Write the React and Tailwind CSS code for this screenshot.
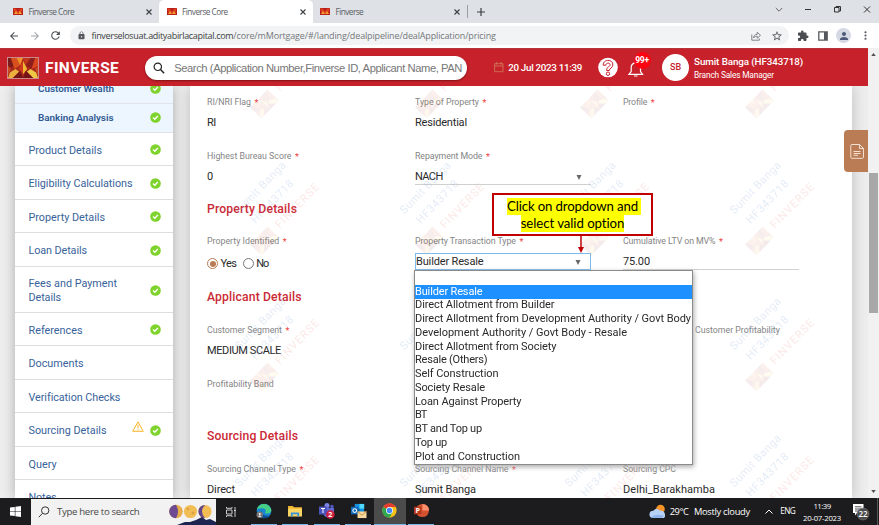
import { useLayoutEffect, useRef } from "react";
import { MdArrowBack, MdArrowForward, MdRefresh, MdLock, MdStarBorder, MdExtension, MdPerson, MdMoreVert } from "react-icons/md";

/* Single-line label whose letter spacing is adjusted to fill a given width. */
function T({ w, className = "", children }) {
  const ref = useRef(null);
  useLayoutEffect(() => {
    const el = ref.current;
    el.style.letterSpacing = "0px";
    const natural = parseFloat(getComputedStyle(el).width);
    const n = el.textContent.length;
    if (w && n > 1) el.style.letterSpacing = (w - natural) / (n - 0.5) + "px";
  }, [w]);
  return <span ref={ref} className={"inline-block w-max shrink-0 whitespace-pre " + className}>{children}</span>;
}

function Logo({ className }) {
  return (
    <svg viewBox="0 0 32 22" className={className} preserveAspectRatio="none">
      <rect width="32" height="22" fill="#a8281c" />
      <path d="M0 0h9l-5 11L0 8z" fill="#7d1a1a" />
      <path d="M3 0l4 12 6-4L9 0z" fill="#d9501f" />
      <path d="M9 0l4 8 3-8z" fill="#f0912c" />
      <path d="M16 0l3 8 5-8z" fill="#c2361c" />
      <path d="M24 0l-5 8 6 4 4-12z" fill="#8e1e1b" />
      <path d="M29 0h3v9l-7 3z" fill="#d9461f" />
      <path d="M16 3l-4.500 9 4.500 6z" fill="#cf3a1e" />
      <path d="M16 3l4.500 9-4.500 6z" fill="#f0b534" />
      <path d="M0 22l2-6 6-4 4 3-6 7z" fill="#ecae3c" />
      <path d="M32 22l-2-6-6-4-4 3 6 7z" fill="#efc646" />
      <path d="M5 22l8-8 3 8zM27 22l-8-8-3 8z" fill="#741416" />
      <path d="M0 9l3 3-3 7zM32 9l-3 3 3 7z" fill="#c94a20" />
    </svg>
  );
}

function MiniLogo() {
  return (
    <svg viewBox="0 0 10 7" className="h-[7px] w-[10px] shrink-0">
      <rect width="10" height="7" fill="#b8201c" />
      <path d="M0 0l3 1 2 3 2-3 3-1-2 5H2z" fill="#e0401f" />
      <path d="M1 6l2-3 2 3 2-3 2 3z" fill="#f4a02c" />
    </svg>
  );
}

function Check() {
  return (
    <svg viewBox="0 0 11 11" className="size-[11px] shrink-0">
      <circle cx="5.5" cy="5.5" r="5.3" fill="#7ed42c" />
      <path d="M3.100 5.600l1.700 1.700 3.100-3.300" fill="none" stroke="#fff" strokeWidth="1.400" />
    </svg>
  );
}

function Cross() {
  return (
    <svg viewBox="0 0 6 6" className="size-[6px] shrink-0">
      <path d="M.5.500l5 5M5.500.500l-5 5" stroke="#3c4043" strokeWidth="1.100" />
    </svg>
  );
}

const tabFont = "font-['Open_Sans',sans-serif] text-[8.300px] text-[#5c6065] pt-[1px]";

function BrowserTop() {
  return (
    <div className="h-[48px] shrink-0">
      <div className="flex h-[23px] bg-[#dee1e6]">
        <div className="flex w-[159px] items-center rounded-br-[5px] pl-[13px] pr-[7px]">
          <MiniLogo />
          <T w={46} className={"ml-[5.500px] " + tabFont}>Finverse Core</T>
          <span className="flex-1" />
          <Cross />
        </div>
        <div className="flex w-[154px] items-center rounded-t-[5px] bg-white pl-[8px] pr-[7px]">
          <MiniLogo />
          <T w={46} className={"ml-[5px] " + tabFont}>Finverse Core</T>
          <span className="flex-1" />
          <Cross />
        </div>
        <div className="flex w-[154px] items-center pl-[7px] pr-[7px]">
          <MiniLogo />
          <T w={28} className={"ml-[5.500px] " + tabFont}>Finverse</T>
          <span className="flex-1" />
          <Cross />
        </div>
        <div className="mt-[5px] h-[13px] w-px bg-[#9a9da2]" />
        <svg viewBox="0 0 8 8" className="ml-[9px] mt-[8px] size-[8px]"><path d="M4 0v8M0 4h8" stroke="#3c4043" strokeWidth="1.200" /></svg>
        <div className="flex-1" />
        <svg viewBox="0 0 100 12" className="mt-[4px] h-[12px] w-[100px]" fill="none" stroke="#333" strokeWidth="1">
          <path d="M.8 4l3.200 3.200L7.200 4" stroke="#666" />
          <path d="M30 5.500h6" />
          <path d="M59.500 3.500h4.500v4.500h-4.500zM61 3.500v-1h4.500v4.500h-1.500" />
          <path d="M89 2.500l6 6M95 2.500l-6 6" />
        </svg>
        <div className="w-[4px]" />
      </div>
      <div className="flex h-[25px] items-center bg-white">
        <MdArrowBack className="ml-[8px] size-[12px] text-[#4a4d51]" />
        <MdArrowForward className="ml-[9px] size-[12px] text-[#a0a3a8]" />
        <MdRefresh className="ml-[8px] size-[13px] text-[#4a4d51]" />
        <div className="ml-[8px] flex h-[19px] w-[719px] items-center rounded-full bg-[#f1f3f4] pl-[7px]">
          <MdLock className="size-[9px] text-[#55585c]" />
          <T w={142} className="ml-[5.500px] font-['Open_Sans',sans-serif] text-[9px] text-[#3d3f42]">finverselosuat.adityabirlacapital.com</T>
          <T w={262.5} className="font-['Open_Sans',sans-serif] text-[9px] text-[#74777b]">/core/mMortgage/#/landing/dealpipeline/dealApplication/pricing</T>
          <span className="flex-1" />
          <svg viewBox="0 0 10 10" className="size-[10px]" fill="none" stroke="#74777b" strokeWidth=".9">
            <path d="M.8 3.500v5.700h7.500V7.500M2.500 7c.3-2.500 1.600-3.700 3.700-3.700V1.200L9.500 4.300 6.200 7.200V5.300C4.700 5.200 3.500 5.700 2.500 7z" />
          </svg>
          <MdStarBorder className="ml-[10px] mr-[6px] size-[12px] text-[#55585c]" />
        </div>
        <MdExtension className="ml-[8px] size-[12px] text-[#4a4d51]" />
        <svg viewBox="0 0 10 10" className="ml-[9px] size-[10px]"><path d="M.8.800h8.400v8.400H.8z" fill="none" stroke="#55585c" strokeWidth="1.300" /><path d="M6 1h3v8H6z" fill="#55585c" /></svg>
        <span className="ml-[8px] flex size-[15px] items-center justify-center rounded-full bg-[#d5d9e4]"><MdPerson className="size-[12px] text-[#4b5877]" /></span>
        <MdMoreVert className="ml-[8px] size-[13px] text-[#5f6368]" />
      </div>
    </div>
  );
}

function Header() {
  return (
    <div className="flex h-[38px] shrink-0 items-center border-t border-[#b5343a] bg-[#c7222b] text-white">
      <Logo className="ml-[7px] h-[22px] w-[32px] border border-[#c9898a]" />
      <T w={74} className="ml-[6px] pt-[3px] text-[15.500px] font-bold leading-none">FINVERSE</T>
      <div className="ml-[26px] flex h-[24px] w-[322px] items-center rounded-full bg-white pl-[8px] shadow-[0_1px_2px_#7d1015]">
        <svg viewBox="0 0 12 12" className="size-[12px]" fill="none" stroke="#222"><circle cx="4.800" cy="4.800" r="3.700" strokeWidth="1.200" /><path d="M7.500 7.500l3.600 3.700" strokeWidth="1.500" /></svg>
        <T w={288} className="ml-[9px] font-['Liberation_Sans',sans-serif] text-[11.200px] leading-[14px] text-[#777]">Search (Application Number,Finverse ID, Applicant Name, PAN</T>
      </div>
      <svg viewBox="0 0 10 11" className="ml-[27px] h-[11px] w-[10px]" fill="none" stroke="#cf7457"><path d="M.6 1.700h8.400v8H.6zM.6 4h8.400M2.500 0v2.500M7 0v2.500" strokeWidth=".9" /></svg>
      <T w={74} className="ml-[4px] pt-[1px] text-[9.800px] font-medium">20 Jul 2023 11:39</T>
      <svg viewBox="0 0 20 21" className="ml-[15.500px] h-[21px] w-[20px]">
        <circle cx="10" cy="10.500" r="9.800" fill="#fff" />
        <path d="M5.200 8.200c-.2-6.500 10.200-6.500 9.600 0-.3 3-3.500 3-3.500 5.300H8.600c-.1-4 3.400-3.800 3.500-5.600 0-2.500-4.200-2.400-4.200.3z" fill="#fff" stroke="#c9202b" strokeWidth="1" />
        <circle cx="10" cy="16.700" r="1.700" fill="#fff" stroke="#c9202b" strokeWidth="1" />
      </svg>
      <div className="relative ml-[10px] h-[26px] w-[22px]">
        <svg viewBox="0 0 16 18" className="absolute left-0 top-[5px] h-[18px] w-[16px]" fill="none" stroke="#fff" strokeWidth="1.200"><path d="M1 14.300h13.500l-2-2.800V7c0-5.500-9.300-5.500-9.300 0v4.500zM6 16h3.500M7.800 1v2" /></svg>
        <span className="absolute left-[6px] top-[-3px] flex size-[17px] items-center justify-center rounded-full bg-[#fb0512] text-[8.500px] font-bold tracking-[-.3px]">99+</span>
      </div>
      <div className="ml-[12.500px] flex size-[27px] items-center justify-center rounded-full bg-white text-[9px] font-medium text-[#c9202b]">SB</div>
      <div className="ml-[5px] flex flex-col items-start pt-[1px]">
        <T w={109} className="text-[9.800px] font-medium leading-[14px]">Sumit Banga (HF343718)</T>
        <T w={80} className="text-[8.400px] leading-[13px]">Branch Sales Manager</T>
      </div>
    </div>
  );
}

const sideItems = [
  ["Product Details", 73.5, "h-[33.5px]", true],
  ["Eligibility Calculations", 104, "h-[33.5px]", true],
  ["Property Details", 76.5, "h-[33.5px]", true],
  ["Loan Details", 58.5, "h-[33.5px]", true],
  ["Fees and Payment|Details", 88.5, "h-[46px]", true],
  ["References", 54, "h-[33.5px]", true],
  ["Documents", 55, "h-[33.5px]", false],
  ["Verification Checks", 91.5, "h-[33.5px]", false],
  ["Sourcing Details", 78, "h-[33.5px]", true],
  ["Query", 28, "h-[33.5px]", false],
  ["Notes", 28, "h-[33.5px]", false],
];

function Sidebar() {
  return (
    <div className="ml-[15px] w-[158px] shrink-0 bg-white text-[#38639b] shadow-[0_0_12px_#aaa]">
      {[["Customer Wealth", 76, "h-[17.500px] items-start"], ["Banking Analysis", 75.500, "h-[29px] items-center"]].map(([t, w, c]) => (
        <div key={t} className={"flex border-b border-[#e0e4e8] bg-[#edf5fe] pl-[23px] pr-[12px] " + c}>
          <T w={w} className={"text-[9.900px] font-semibold leading-[14px] text-[#2f5a94] " + (t[0] === "C" ? "-mt-[4px]" : "pt-[1px]")}>{t}</T>
          <span className="flex-1" />
          <span className={t[0] === "C" ? "-mt-[3px]" : ""}><Check /></span>
        </div>
      ))}
      {sideItems.map(([t, w, h, ok]) => (
        <div key={t} className={"flex items-center border-b-[1.500px] border-[#dedede] pl-[13.500px] pr-[12px] text-[10.800px] leading-[13.500px] " + h}>
          <div className="flex flex-col items-start pt-[3.500px]">
            {t.split("|").map((l, i) => <T key={l} w={i ? 32.5 : w}>{l}</T>)}
          </div>
          <span className="flex-1" />
          {t === "Sourcing Details" && (
            <svg viewBox="0 0 12 11" className="-mt-[6px] mr-[6px] h-[11px] w-[12px]" fill="none" stroke="#fbb52a" strokeWidth="1"><path d="M6 .8L11.300 10.300H.7zM6 3.500v3.800M6 8.200v1" /></svg>
          )}
          {ok && <span className="pt-[2px]"><Check /></span>}
        </div>
      ))}
    </div>
  );
}

function Field({ label, w, req = true, children, indent = "" }) {
  return (
    <div className="w-[208px] shrink-0">
      <div className={"flex h-[16px] items-center text-[8.800px] leading-[12px] text-[#858585] " + indent}>
        <T w={w}>{label}</T>
        {req && <span className="ml-[3.500px] pt-[2px] text-[9px] leading-none text-[#f04040]">*</span>}
      </div>
      <div className="h-[26px] text-[11px] text-[#2a2a2a]">{children}</div>
    </div>
  );
}

function Val({ w, children }) {
  return <div className="flex h-[24px] items-center pt-[2px]"><T w={w}>{children}</T></div>;
}

function Heading({ w, children }) {
  return <div className="flex h-[24px] items-center pt-[1px] text-[12.200px] font-medium text-[#cb2a35]"><T w={w}>{children}</T></div>;
}

function Arrow() {
  return <svg viewBox="0 0 6 5" className="h-[5px] w-[6px]"><path d="M.5 0h5L3 5z" fill="#686868" /></svg>;
}

function Watermark({ x, y }) {
  return (
    <div className="absolute" style={{ left: x, top: y }}>
      <div className="absolute left-[-12px] top-[19px] flex w-[76px] -rotate-46 justify-center text-[11.200px] leading-[14px] text-[#7ba0d4]"><T w={68}>Sumit Banga</T></div>
      <div className="absolute left-[6px] top-[33px] flex w-[64px] -rotate-46 justify-center text-[11.200px] leading-[14px] text-[#7ba0d4]"><T w={56}>HF343718</T></div>
      <div className="absolute left-[34px] top-[37px] flex w-[58px] -rotate-46 justify-center text-[11.200px] leading-[14px] text-[#eb8d84]"><T w={58}>FINVERSE</T></div>
      <Logo className="absolute left-[17px] top-[71px] h-[16px] w-[25px] -rotate-46 opacity-40" />
    </div>
  );
}

function Content() {
  return (
    <div className="relative ml-[17px] h-[412px] w-[662px] shrink-0 overflow-hidden bg-white pl-[17px] pt-[8px] shadow-[0_0_14px_#bbb]">
      <div className="flex h-[54px]">
        <Field label="RI/NRI Flag" w={44}><Val w={9}>RI</Val></Field>
        <Field label="Type of Property" w={64}><Val w={52}>Residential</Val></Field>
        <Field label="Profile" w={24} />
      </div>
      <div className="flex h-[49px]">
        <Field label="Highest Bureau Score" w={84.5}><Val>0</Val></Field>
        <Field label="Repayment Mode" w={67.5}>
          <div className="flex h-[21px] w-[176px] items-center border-b border-[#d0d0d0] pt-[6px]"><T w={28}>NACH</T><span className="ml-auto mr-[9px] flex"><Arrow /></span></div>
        </Field>
      </div>
      <Heading w={90}>Property Details</Heading>
      <div className="flex h-[64px] pt-[12px]">
        <Field label="Property Identified" w={72}>
          <div className="flex h-[26px] items-center pt-[3px]">
            <span className="flex size-[11px] items-center justify-center rounded-full border border-[#bb7d55]"><span className="size-[6px] rounded-full bg-[#bb7d55]" /></span>
            <T w={16} className="ml-[2.500px] pt-[1px]">Yes</T>
            <span className="ml-[6.500px] size-[11px] rounded-full border border-[#777]" />
            <T w={12.5} className="ml-[2.500px] pt-[1px]">No</T>
          </div>
        </Field>
        <Field label="Property Transaction Type" w={101}>
          <div className="mt-[4px] flex h-[17px] w-[176px] items-center border border-[#7dbaf0] pt-[1px]"><T w={67.5} className="pt-[1px]">Builder Resale</T><span className="ml-auto mr-[9px] flex"><Arrow /></span></div>
        </Field>
        <Field label="Cumulative LTV on MV%" w={92.5}>
          <div className="flex h-[21px] w-[176px] items-center border-b border-[#d0d0d0] pt-[6px]"><T w={27}>75.00</T></div>
        </Field>
      </div>
      <Heading w={94.5}>Applicant Details</Heading>
      <div className="flex h-[67px] pt-[13px]">
        <Field label="Customer Segment" w={75}><Val w={74}>MEDIUM SCALE</Val></Field>
        <div className="w-[208px]" />
        <Field label="Customer Profitability" w={84.5} req={false} indent="pl-[72px]" />
      </div>
      <div className="h-[48px]"><Field label="Profitability Band" w={66.5} req={false} /></div>
      <Heading w={91}>Sourcing Details</Heading>
      <div className="flex pt-[13px]">
        <Field label="Sourcing Channel Type" w={89}><Val w={28}>Direct</Val></Field>
        <Field label="Sourcing Channel Name" w={93.5}><Val w={61}>Sumit Banga</Val></Field>
        <Field label="Sourcing CPC" w={53} req={false}><Val w={92}>Delhi_Barakhamba</Val></Field>
      </div>
      <div className="pointer-events-none absolute inset-0 opacity-[.2]">
        {[-61, 76, 212, 349].flatMap((y) => [45, 210, 375, 540].map((x) => <Watermark key={x + "-" + y} x={x} y={y} />))}
      </div>
    </div>
  );
}

const options = [
  ["", 0], ["Builder Resale", 67.5], ["Direct Allotment from Builder", 139.5], ["Direct Allotment from Development Authority / Govt Body", 276],
  ["Development Authority / Govt Body - Resale", 212], ["Direct Allotment from Society", 141.5], ["Resale (Others)", 72.5], ["Self Construction", 83.5],
  ["Society Resale", 70], ["Loan Against Property", 106.5], ["BT", 12], ["BT and Top up", 67], ["Top up", 32], ["Plot and Construction", 105],
];

function Dropdown() {
  return (
    <div className="absolute left-[414px] top-[270px] w-[279px] border border-[#8a8a8a] bg-white text-[11px] text-[#2a2a2a] shadow-[1px_2px_5px_#aaa]">
      {options.map(([t, w], i) => (
        <div key={i} className={"flex h-[13.750px] items-center " + (i === 1 ? "bg-[#1e90ff] text-white" : "")}>{t && <T w={w} className="pt-[.5px]">{t}</T>}</div>
      ))}
    </div>
  );
}

function Callout() {
  return (
    <>
      <div className="absolute left-[492px] top-[193px] flex h-[43px] w-[161px] flex-col items-center justify-center border-2 border-[#c00000] bg-white font-['Lato',sans-serif] text-[13.200px] leading-[17px] text-black">
        <span className="ml-[3px] flex h-[17px] bg-[#ffff00] pr-[3px]"><T w={131}>Click on dropdown and</T></span>
        <span className="flex h-[17px] bg-[#ffff00]"><T w={104}>select valid option</T></span>
      </div>
      <svg viewBox="0 0 6 18" className="absolute left-[578px] top-[235px] h-[18px] w-[6px]"><path d="M3 0v13" stroke="#c00000" strokeWidth="1.500" /><path d="M0 12h6L3 18z" fill="#c00000" /></svg>
    </>
  );
}

function SideTab() {
  return (
    <div className="absolute left-[844px] top-[130px] flex h-[42px] w-[24px] items-center justify-center rounded-l-[4px] bg-[#b97c54]">
      <svg viewBox="0 0 14 15" className="ml-[2px] h-[15px] w-[14px]" fill="none" stroke="#f4dfd0"><path d="M.8 1.500q0-1 1-1h7.700l4 4v8.800q0 1-1 1H1.800q-1 0-1-1z" /><path d="M9.500.5v4h4M3.500 7.500h7M3.500 9.500h7M3.500 11.300h4.500" /></svg>
    </div>
  );
}

function Slot({ active, open = true, children }) {
  return (
    <div className={"flex h-full w-[31.500px] shrink-0 flex-col items-center " + (active ? "bg-[#4b4b4b]" : "")}>
      <div className="flex flex-1 items-center">{children}</div>
      <div className={"h-[1.500px] " + (active ? "w-full" : "w-[26px]") + (open ? " bg-[#76b9ed]" : "")} />
    </div>
  );
}

function Taskbar() {
  return (
    <div className="flex h-[27px] shrink-0 items-center bg-[#1c1c1e] font-['Open_Sans',sans-serif] text-white">
      <svg viewBox="0 0 11 11" className="ml-[10px] size-[11px]" fill="#fff"><path d="M0 1.500L4.800.9v4.300H0zM5.400.8L11 0v5.200H5.400zM0 5.800h4.800v4.300L0 9.500zM5.400 5.800H11V11l-5.600-.8z" /></svg>
      <div className="ml-[10px] flex h-[26px] w-[185px] items-center self-end bg-[#f2f2f2] pl-[7px]">
        <svg viewBox="0 0 12 12" className="size-[12px]" fill="none" stroke="#333"><circle cx="7.200" cy="4.500" r="3.700" /><path d="M4.500 7.300L.8 11.200" /></svg>
        <T w={82.5} className="ml-[7px] text-[9.600px] text-[#484848]">Type here to search</T>
        <svg viewBox="0 0 48 26" className="ml-auto h-[26px] w-[48px]">
          <circle cx="8" cy="12.500" r="6.800" fill="#e8ae48" /><path d="M8 5.700a6.800 6.800 0 0 0 0 13.600q4-6.800 0-13.600z" fill="#6d4a91" />
          <circle cx="22.500" cy="12.500" r="6.600" fill="#f2bd55" /><circle cx="20" cy="10" r="1.200" fill="#dca044" /><circle cx="25" cy="14" r="1.500" fill="#dca044" />
          <circle cx="37" cy="12.500" r="6.600" fill="#f2bd55" /><path d="M37 5.900a6.600 6.600 0 0 0 0 13.200q-6-6.600 0-13.200z" fill="#64468a" />
          <path d="M9 26l8-3 5 0 6-2 6-3 4 3 4-1 6 3v3z" fill="#1e2450" />
        </svg>
      </div>
      <svg viewBox="0 0 12 12" className="ml-[9px] size-[12px]" fill="none" stroke="#ddd" strokeWidth=".9"><path d="M1.500 4h5.500v4H1.500zM1.500 1v1.300H7V1M1.500 11V9.700H7V11M10 1v10M9 4.500h2" /></svg>
      <div className="ml-[11px] flex h-full">
        <Slot>
          <svg viewBox="0 0 17 17" className="size-[16px]">
            <circle cx="8.500" cy="8.500" r="7.800" fill="#1685d2" /><path d="M1 7C2-.5 14-1.500 16.200 7c.6 4-4 5-6.700 3.500 2-2 .5-5-2.500-5C4.500 5.500 2 6 1 7z" fill="#45cf86" /><path d="M6.500 8c-1 4 3 7 8 5-2 2.500-4.500 3.300-7 3C5 14 5 10 6.500 8z" fill="#0d4c93" />
            <circle cx="4" cy="12.500" r="3.500" fill="#777" /><circle cx="4" cy="11.700" r="1" fill="#fff" /><path d="M2.300 14.500q1.700-2.500 3.400 0z" fill="#fff" />
          </svg>
        </Slot>
        <Slot>
          <svg viewBox="0 0 15 13" className="h-[12px] w-[14px]"><path d="M0 1h5l1.500 1.500H15V12H0z" fill="#f2b830" /><path d="M0 4h15v8.500H0z" fill="#fbd664" /><path d="M3 12.500V8h9v4.500h-2V10H5v2.500z" fill="#3b93d9" /></svg>
        </Slot>
        <Slot>
          <svg viewBox="0 0 17 17" className="size-[17px]"><circle cx="9" cy="3.500" r="2.500" fill="#7b83eb" /><circle cx="14" cy="4.500" r="1.700" fill="#5059c9" /><path d="M5 6h11v5q-1 4-5 4.500t-6-4z" fill="#6068d0" /><path d="M1 4.500h8v8H1z" fill="#4b53bc" /><path d="M3 6.500h4M5 6.500v4.500" stroke="#fff" /><circle cx="12.300" cy="12.500" r="4.300" fill="#d0213f" /><text x="12.300" y="15" fontSize="7" fontWeight="700" textAnchor="middle" fill="#fff">2</text></svg>
        </Slot>
        <Slot>
          <svg viewBox="0 0 18 17" className="h-[16px] w-[17px]"><path d="M5 1h10v10H5z" fill="#1490df" /><path d="M10 1h5v5h-5z" fill="#50d9ff" /><path d="M5 6h5v5H5z" fill="#0f4a8a" /><path d="M1 4h8v8H1z" fill="#0f6cbd" /><circle cx="5" cy="8" r="2" fill="none" stroke="#fff" strokeWidth="1.100" /><path d="M8 9h9.500v7H8z" fill="#f8d9a0" /><path d="M8 9l4.700 4L17.500 9" fill="none" stroke="#c68d3f" /></svg>
        </Slot>
        <Slot active>
          <svg viewBox="0 0 16 16" className="size-[15px]"><circle cx="8" cy="8" r="7.600" fill="#fbc116" /><path d="M8 8L1.400 4.200A7.600 7.600 0 0 1 14.600 4.200H8z" fill="#e33b2e" /><path d="M8 8L1.400 4.200A7.600 7.600 0 0 0 8 15.600l3.300-5.700z" fill="#2da94f" /><circle cx="8" cy="8" r="3.700" fill="#fff" /><circle cx="8" cy="8" r="2.900" fill="#4285f4" /></svg>
        </Slot>
        <Slot>
          <svg viewBox="0 0 16 16" className="size-[15px]"><circle cx="9" cy="8" r="7" fill="#d35230" /><path d="M9 1a7 7 0 0 1 7 7H9z" fill="#ff8f6b" /><path d="M0 4h8v8H0z" fill="#b7371b" /><text x="4" y="10.700" fontSize="7.500" fontWeight="700" textAnchor="middle" fill="#fff">P</text></svg>
        </Slot>
      </div>
      <span className="flex-1" />
      <svg viewBox="0 0 17 15" className="h-[15px] w-[17px]"><circle cx="11.500" cy="5" r="4.300" fill="#f59324" /><path d="M4 14q-4-.5-3.500-4T4.500 6.800Q7 3 11 6.500q4.500 0 5 4T13 14z" fill="#b8d2f5" /><path d="M2 13q6-4 13-1l-2 2H4z" fill="#8fb5ec" /></svg>
      <T w={19} className="ml-[4px] text-[9.300px]">29°C</T>
      <T w={56} className="ml-[5.500px] text-[9.300px]">Mostly cloudy</T>
      <svg viewBox="0 0 8 5" className="ml-[15px] h-[5px] w-[8px]" fill="none" stroke="#fff"><path d="M.5 4.500L4 1l3.500 3.500" /></svg>
      <T w={15} className="ml-[7.500px] text-[8.200px]">ENG</T>
      <div className="ml-[8px] flex w-[38px] flex-col items-center text-[7.800px] leading-[12px]"><T w={17.5}>11:39</T><T w={38}>20-07-2023</T></div>
      <svg viewBox="0 0 18 18" className="ml-[11px] mr-[7px] h-[18px] w-[18px]">
        <path d="M1 1h10.500v9H5l-2 2.500V10H1z" fill="#fff" /><path d="M3 3.800h6.500M3 6h6.500M3 8h5" stroke="#222" strokeWidth=".8" />
        <circle cx="11" cy="11" r="6" fill="#4c4c4c" stroke="#888" strokeWidth=".5" /><text x="11" y="13.800" fontSize="8" fontWeight="600" textAnchor="middle" fill="#fff">22</text>
      </svg>
      <div className="mr-[1px] h-full w-px bg-[#555]" />
    </div>
  );
}

export default function App() {
  return (
    <div className="relative flex h-[525px] w-[879px] flex-col overflow-hidden bg-white font-['Roboto',sans-serif]">
      <BrowserTop />
      <div className="flex h-[450px] shrink-0">
        <div className="flex w-[868px] flex-col">
          <Header />
          <div className="flex h-[412px] overflow-hidden bg-[#eeeeee]">
            <Sidebar />
            <Content />
          </div>
        </div>
        <div className="flex w-[11px] flex-col items-center bg-[#f1f1f1]">
          <svg viewBox="0 0 6 4" className="mt-[5px] h-[3px] w-[5px]"><path d="M0 4h6L3 0z" fill="#505050" /></svg>
          <div className="mt-[117px] h-[140px] w-[9px] bg-[#a8a8a8]" />
          <svg viewBox="0 0 6 4" className="mb-[5px] mt-auto h-[3px] w-[5px]"><path d="M0 0h6L3 4z" fill="#505050" /></svg>
        </div>
      </div>
      <Taskbar />
      <Dropdown />
      <Callout />
      <SideTab />
    </div>
  );
}
